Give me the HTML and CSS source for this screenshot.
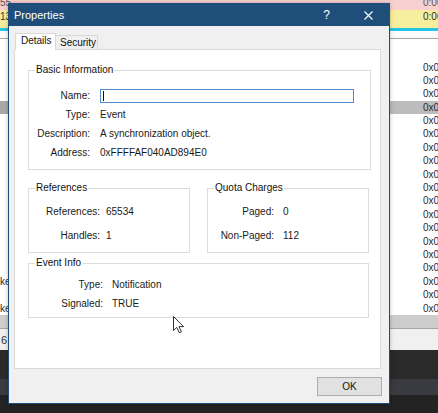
FILE: index.html
```html
<!DOCTYPE html>
<html>
<head>
<meta charset="utf-8">
<title>Properties</title>
<link rel="stylesheet" href="styles.css">
</head>
<body>
<div class="screen">
  <div class="app">
    <div class="brow pink"><span class="cl">55</span><span class="cr">0:00</span></div>
    <div class="brow yellow"><span class="cl">13</span><span class="cr">0:00</span></div>
    <div class="brow cyan"></div>
    <div class="brow whitegap"></div>
    <div class="brow hline"></div>
    <div class="list">
      <div class="list-head"></div>
      <div class="lrow"><span class="cl"></span><span class="cr">0x0000</span></div>
      <div class="lrow"><span class="cl"></span><span class="cr">0x0000</span></div>
      <div class="lrow"><span class="cl"></span><span class="cr">0x0000</span></div>
      <div class="lrow sel"><span class="cl"></span><span class="cr">0x0000</span></div>
      <div class="lrow"><span class="cl"></span><span class="cr">0x0000</span></div>
      <div class="lrow"><span class="cl"></span><span class="cr">0x0000</span></div>
      <div class="lrow"><span class="cl"></span><span class="cr">0x0000</span></div>
      <div class="lrow"><span class="cl"></span><span class="cr">0x0000</span></div>
      <div class="lrow"><span class="cl"></span><span class="cr">0x0000</span></div>
      <div class="lrow"><span class="cl"></span><span class="cr">0x0000</span></div>
      <div class="lrow"><span class="cl"></span><span class="cr">0x0000</span></div>
      <div class="lrow"><span class="cl"></span><span class="cr">0x0000</span></div>
      <div class="lrow"><span class="cl"></span><span class="cr">0x0000</span></div>
      <div class="lrow"><span class="cl"></span><span class="cr">0x0000</span></div>
      <div class="lrow"><span class="cl"></span><span class="cr">0x0000</span></div>
      <div class="lrow"><span class="cl"></span><span class="cr">0x0000</span></div>
      <div class="lrow"><span class="cl">ke</span><span class="cr">0x0000</span></div>
      <div class="lrow"><span class="cl"></span><span class="cr">0x0000</span></div>
      <div class="lrow"><span class="cl">ke</span><span class="cr">0x0000</span></div>
    </div>
    <div class="brow scrollbar"></div>
    <div class="brow sline"></div>
    <div class="brow status"><span class="cl">6</span></div>
    <div class="brow dark1"></div>
    <div class="brow dark2"></div>
    <div class="brow dark3"></div>
  </div>

  <div class="dialog">
    <div class="titlebar">
      <span class="title">Properties</span>
      <span class="help">?</span>
      <svg class="close" width="9" height="9" viewBox="0 0 9 9"><path d="M0.5 0.5L8.5 8.5M8.5 0.5L0.5 8.5" stroke="#ffffff" stroke-width="1.1" fill="none"/></svg>
    </div>
    <div class="body">
      <div class="tabs">
        <div class="tab active">Details</div>
        <div class="tab">Security</div>
      </div>
      <div class="panel">
        <fieldset class="group basic">
          <legend>Basic Information</legend>
          <div class="grid g-basic">
            <span class="lbl">Name:</span><span class="val"><span class="input"><span class="caret"></span></span></span>
            <span class="lbl">Type:</span><span class="val">Event</span>
            <span class="lbl">Description:</span><span class="val">A synchronization object.</span>
            <span class="lbl">Address:</span><span class="val">0xFFFFAF040AD894E0</span>
          </div>
        </fieldset>
        <div class="pair">
          <fieldset class="group half">
            <legend>References</legend>
            <div class="grid g-refs">
              <span class="lbl">References:</span><span class="val">65534</span>
              <span class="lbl">Handles:</span><span class="val">1</span>
            </div>
          </fieldset>
          <fieldset class="group half">
            <legend>Quota Charges</legend>
            <div class="grid g-quota">
              <span class="lbl">Paged:</span><span class="val">0</span>
              <span class="lbl">Non-Paged:</span><span class="val">112</span>
            </div>
          </fieldset>
        </div>
        <fieldset class="group event">
          <legend>Event Info</legend>
          <div class="grid g-event">
            <span class="lbl">Type:</span><span class="val">Notification</span>
            <span class="lbl">Signaled:</span><span class="val">TRUE</span>
          </div>
        </fieldset>
      </div>
      <div class="footer">
        <button class="ok" type="button">OK</button>
      </div>
    </div>
  </div>

  <svg class="cursor" width="13" height="18" viewBox="0 0 13 18">
    <path d="M0.5 0.5 L0.5 14.5 L3.8 11.4 L6.3 16.8 L8.4 15.9 L6 10.6 L10.6 10.6 Z" fill="#ffffff" stroke="#333333" stroke-width="1" stroke-linejoin="round"/>
  </svg>
</div>
</body>
</html>
```

FILE: styles.css
```css
html, body {
  margin: 0;
  padding: 0;
}

body {
  font-family: "Liberation Sans", Arial, sans-serif;
  font-size: 10px;
  color: #1a1a1a;
  background: #ffffff;
}

.screen {
  position: relative;
  width: 438px;
  height: 413px;
  overflow: hidden;
}

/* ---------- background application ---------- */
.app {
  display: flex;
  flex-direction: column;
  width: 438px;
  height: 413px;
}

.brow {
  display: grid;
  grid-template-columns: 423px 15px;
  flex: none;
  overflow: hidden;
  white-space: nowrap;
}

.cl {
  padding-left: 0;
  overflow: hidden;
}

.cr {
  overflow: hidden;
  white-space: nowrap;
}

.pink {
  height: 10px;
  background: #f8d0d0;
  line-height: 5px;
  color: #555;
}

.yellow {
  height: 18px;
  background: #f6ee9c;
  line-height: 14px;
  color: #333;
}

.cyan {
  height: 3px;
  background: #25c3e4;
}

.whitegap {
  height: 7px;
  background: #fbfbfb;
}

.hline {
  height: 1px;
  background: #a5a5a5;
}

.list {
  display: flex;
  flex-direction: column;
  height: 276px;
  background: #ffffff;
  flex: none;
}

.list-head {
  height: 21.5px;
  flex: none;
}

.lrow {
  display: grid;
  grid-template-columns: 423px 15px;
  height: 13.4px;
  line-height: 13.4px;
  flex: none;
  color: #2a2a2a;
}

.lrow.sel {
  background: linear-gradient(to right, #a9a9a9, #bdbdbd);
}

.scrollbar {
  height: 13px;
  background: #cdcdcd;
}

.sline {
  height: 1px;
  background: #a6a6a6;
}

.status {
  height: 21px;
  background: #f0f0f0;
  line-height: 22px;
  font-size: 11px;
  color: #333;
}

.status .cl {
  padding-left: 1px;
}

.dark1 {
  height: 29px;
  background: #2a2a2b;
}

.dark2 {
  height: 16px;
  background: #3a3a41;
}

.dark3 {
  height: 18px;
  background: #232324;
}

/* ---------- dialog window ---------- */
.dialog {
  position: absolute;
  left: 8px;
  top: 3px;
  width: 382px;
  height: 401px;
  box-sizing: border-box;
  border: 1px solid #1f4e7a;
  background: #f0f0f0;
  display: flex;
  flex-direction: column;
  box-shadow: 0 0 4px rgba(0, 0, 0, 0.25);
}

.titlebar {
  flex: none;
  height: 22px;
  background: #1f4e7a;
  color: #ffffff;
  display: flex;
  align-items: center;
  padding-left: 5px;
}

.title {
  flex: 1;
  font-size: 11px;
  line-height: 22px;
}

.help {
  font-size: 12px;
  line-height: 22px;
  margin-right: 34px;
}

.close {
  display: block;
  margin-right: 16px;
}

.body {
  flex: 1;
  display: flex;
  flex-direction: column;
  padding: 7px 8px 0 5px;
}

.tabs {
  display: flex;
  align-items: flex-end;
  height: 16px;
  padding-left: 1px;
  flex: none;
}

.tab {
  box-sizing: border-box;
  color: #111;
}

.tab.active {
  position: relative;
  z-index: 1;
  width: 41px;
  height: 17px;
  margin-bottom: -1px;
  border: 1px solid #d9d9d9;
  border-bottom: none;
  background: #ffffff;
  padding-left: 5px;
  line-height: 14px;
}

.tab:not(.active) {
  width: 42px;
  height: 14px;
  border-top: 1px solid #d9d9d9;
  border-right: 1px solid #d9d9d9;
  background: #f0f0f0;
  padding-left: 4px;
  line-height: 13px;
}

.panel {
  flex: none;
  box-sizing: border-box;
  height: 320px;
  border: 1px solid #d9d9d9;
  background: #ffffff;
  padding: 14px 0 0 13px;
}

.group {
  margin: 0;
  border: 1px solid #dcdcdc;
  box-sizing: border-box;
  min-inline-size: 0;
}

.group legend {
  font-size: 10px;
  line-height: 12px;
  margin-left: 6px;
  padding: 0 1px;
  color: #111;
}

.basic {
  width: 343px;
  padding: 10px 0 7px 0;
}

.pair {
  display: flex;
  gap: 17px;
  margin-top: 12px;
}

.half {
  width: 162px;
  padding: 5px 0 5px 0;
}

.event {
  width: 341px;
  margin-top: 4px;
  padding: 6px 0 4px 0;
}

.grid {
  display: grid;
  grid-auto-rows: 19px;
  align-items: center;
}

.lbl {
  text-align: right;
  line-height: 19px;
  white-space: nowrap;
}

.val {
  line-height: 19px;
  white-space: nowrap;
  display: flex;
  align-items: center;
}

.g-basic {
  grid-template-columns: 61px 1fr;
  column-gap: 10px;
}

.g-refs {
  grid-template-columns: 71px 1fr;
  column-gap: 6px;
  grid-auto-rows: 24px;
}

.g-quota {
  grid-template-columns: 66px 1fr;
  column-gap: 9px;
  grid-auto-rows: 24px;
}

.g-event {
  grid-template-columns: 74px 1fr;
  column-gap: 9px;
}

.input {
  display: block;
  box-sizing: border-box;
  width: 254px;
  height: 14px;
  border: 1px solid #4a8ccb;
  background: #ffffff;
  padding: 1px 0 0 2px;
}

.caret {
  display: block;
  width: 1px;
  height: 10px;
  background: #111;
}

.footer {
  display: flex;
  justify-content: flex-end;
  padding-top: 8px;
  margin-right: -1px;
  flex: none;
}

.ok {
  width: 65px;
  height: 19px;
  box-sizing: border-box;
  border: 1px solid #adadad;
  background: #e1e1e1;
  font-family: "Liberation Sans", Arial, sans-serif;
  font-size: 10px;
  color: #111;
  padding: 0;
  margin: 0;
}

.cursor {
  position: absolute;
  left: 173px;
  top: 316px;
}
```
